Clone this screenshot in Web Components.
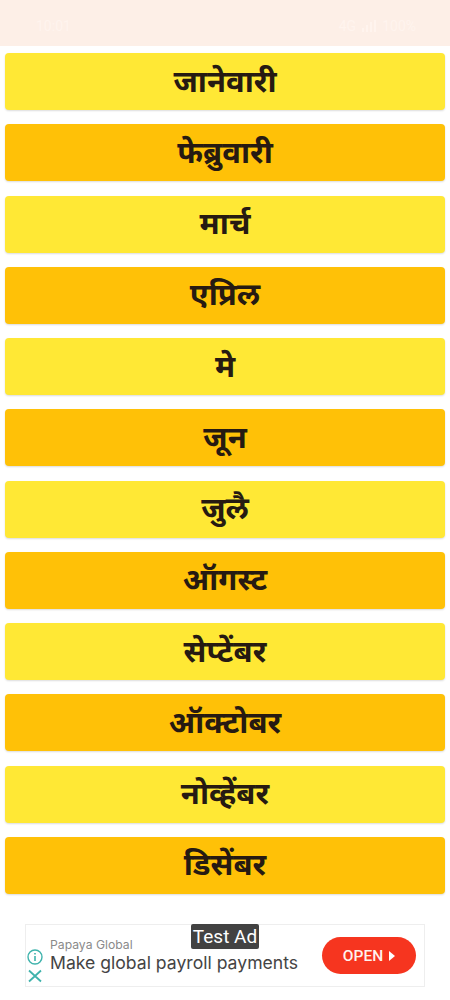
<!DOCTYPE html>
<html lang="mr">
<head>
<meta charset="utf-8">
<title>महिने</title>
<style>
  html, body { margin: 0; padding: 0; background: #fff; }
  body { width: 450px; height: 1000px; overflow: hidden; font-family: "Noto Sans", "Liberation Sans", sans-serif; }
</style>
</head>
<body>
<status-strip></status-strip>
<month-list>
  <month-card>जानेवारी</month-card>
  <month-card tone="amber">फेब्रुवारी</month-card>
  <month-card>मार्च</month-card>
  <month-card tone="amber">एप्रिल</month-card>
  <month-card>मे</month-card>
  <month-card tone="amber">जून</month-card>
  <month-card>जुलै</month-card>
  <month-card tone="amber">ऑगस्ट</month-card>
  <month-card>सेप्टेंबर</month-card>
  <month-card tone="amber">ऑक्टोबर</month-card>
  <month-card>नोव्हेंबर</month-card>
  <month-card tone="amber">डिसेंबर</month-card>
</month-list>
<ad-banner></ad-banner>

<script>
// Faint status bar at the top
class StatusStrip extends HTMLElement {
  constructor() {
    super();
    this.attachShadow({ mode: "open" });
    this.shadowRoot.innerHTML = `
      <style>
        :host {
          display: flex;
          justify-content: space-between;
          align-items: center;
          height: 46px;
          padding: 6px 34px 0 36px;
          box-sizing: border-box;
          background: #fdefe7;
          color: #fff4ee;
          font: 14px "Roboto", sans-serif;
        }
        .right {
          display: flex;
          align-items: center;
          gap: 6px;
        }
      </style>
      <span>10:01</span>
      <span class="right">
        <span>4G</span>
        <svg width="14" height="12" viewBox="0 0 14 12" fill="#fff4ee"><path d="M0 8h2v4H0zM4 5h2v7H4zM8 2h2v10H8zM12 0h2v12h-2z"/></svg>
        <span>100%</span>
      </span>`;
  }
}

class MonthList extends HTMLElement {
  constructor() {
    super();
    this.attachShadow({ mode: "open" });
    this.shadowRoot.innerHTML = `
      <style>
        :host {
          display: flex;
          flex-direction: column;
          gap: 14.27px;
          padding: 7px 5px 0;
        }
      </style>
      <slot></slot>`;
  }
}

class MonthCard extends HTMLElement {
  constructor() {
    super();
    this.attachShadow({ mode: "open" });
    this.shadowRoot.innerHTML = `
      <style>
        :host {
          display: flex;
          justify-content: center;
          align-items: center;
          height: 57px;
          padding-bottom: 4px;
          box-sizing: border-box;
          border-radius: 4px;
          background: #ffe835;
          box-shadow: 0 1px 2px rgba(0, 0, 0, 0.14);
          color: #261a12;
          font: 700 31px "Noto Sans", "Noto Sans Devanagari", "Lohit Devanagari", sans-serif;
        }
        :host([tone="amber"]) {
          background: #ffc107;
        }
      </style>
      <slot></slot>`;
  }
}

// Test ad at the bottom of the page
class AdBanner extends HTMLElement {
  constructor() {
    super();
    this.attachShadow({ mode: "open" });
    this.shadowRoot.innerHTML = `
      <style>
        :host {
          display: block;
          position: absolute;
          left: 25px;
          top: 924px;
          width: 400px;
          height: 63px;
          box-sizing: border-box;
          border: 1px solid #eeeeee;
          background: #fff;
          font-family: "Inter", "Roboto", sans-serif;
        }
        .row {
          display: flex;
          align-items: center;
          height: 100%;
        }
        .icons {
          display: flex;
          flex-direction: column;
          align-items: center;
          gap: 4px;
          width: 18px;
          align-self: flex-end;
          margin: 0 1px 3px 0;
          flex: none;
        }
        .copy {
          flex: 1;
          margin-left: 5px;
          min-width: 0;
        }
        .brand {
          font-size: 12.2px;
          line-height: 15px;
          color: #8a8a8a;
        }
        .title {
          font-size: 17.6px;
          line-height: 22px;
          color: #444;
          white-space: nowrap;
        }
        .open {
          display: flex;
          justify-content: center;
          align-items: center;
          gap: 6px;
          width: 94px;
          height: 37px;
          margin-right: 8px;
          border-radius: 19px;
          background: #f6351f;
          color: #fff2ee;
          font: 500 15.5px "Roboto", sans-serif;
          flex: none;
        }
        .tag {
          position: absolute;
          left: 165px;
          top: -1px;
          width: 68px;
          height: 25px;
          border-radius: 2px;
          background: #424242;
          color: #fff;
          font: 19px/25px "Roboto", sans-serif;
          text-align: center;
        }
      </style>
      <div class="row">
        <div class="icons">
          <svg width="16" height="16" viewBox="0 0 16 16" fill="none" stroke="#3fb3ac" stroke-width="1.4">
            <circle cx="8" cy="8" r="7"/>
            <path d="M8 7v5M8 4v1.6" stroke-width="1.6"/>
          </svg>
          <svg width="14" height="14" viewBox="0 0 14 14" fill="none" stroke="#3fb3ac" stroke-width="1.8">
            <path d="M1 1.5l12 11M13 1.5l-12 11"/>
          </svg>
        </div>
        <div class="copy">
          <div class="brand">Papaya Global</div>
          <div class="title">Make global payroll payments</div>
        </div>
        <div class="open">OPEN
          <svg width="6" height="10" viewBox="0 0 6 10"><path d="M0 0l6 5-6 5z" fill="#fff"/></svg>
        </div>
      </div>
      <div class="tag">Test Ad</div>`;
  }
}

customElements.define("status-strip", StatusStrip);
customElements.define("month-list", MonthList);
customElements.define("month-card", MonthCard);
customElements.define("ad-banner", AdBanner);
</script>
</body>
</html>
